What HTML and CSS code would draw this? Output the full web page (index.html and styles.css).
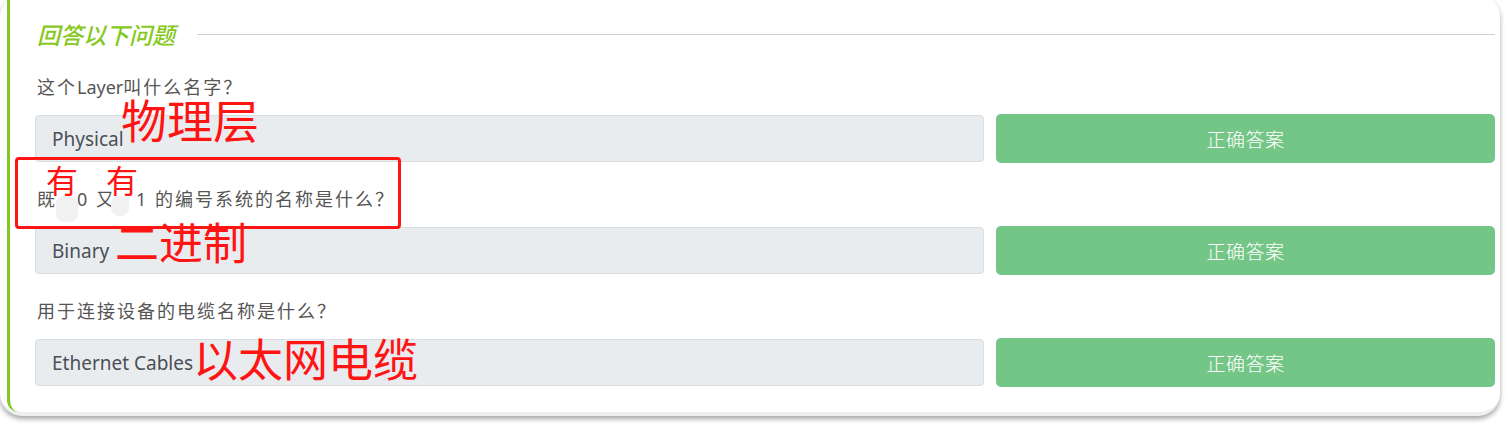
FILE: index.html
```html
<!DOCTYPE html>
<html lang="zh-CN">
<head>
<meta charset="utf-8">
<title>回答以下问题</title>
<link rel="stylesheet" href="styles.css">
</head>
<body>
<div class="window">
  <div class="card">
    <div class="heading">
      <h3 class="heading-title">回答以下问题</h3>
      <div class="heading-rule"></div>
    </div>

    <div class="question">
      <p class="q-text">这个<span class="latin">Layer</span>叫什么名字？</p>
      <div class="row">
        <div class="answer">Physical</div>
        <button class="btn">正确答案</button>
      </div>
      <span class="note note-1">物理层</span>
    </div>

    <div class="question">
      <p class="q-text">既<span class="erased"></span>0 又<span class="erased"></span>1 的编号系统的名称是什么？</p>
      <div class="row">
        <div class="answer">Binary</div>
        <button class="btn">正确答案</button>
      </div>
      <span class="note note-2">二进制</span>
      <span class="note-small note-you1">有</span>
      <span class="note-small note-you2">有</span>
      <span class="blob blob-1"></span>
      <span class="blob blob-2"></span>
      <span class="red-box"></span>
    </div>

    <div class="question">
      <p class="q-text">用于连接设备的电缆名称是什么？</p>
      <div class="row">
        <div class="answer">Ethernet Cables</div>
        <button class="btn">正确答案</button>
      </div>
      <span class="note note-3">以太网电缆</span>
    </div>
  </div>
</div>
</body>
</html>
```

FILE: styles.css
```css
html, body {
  margin: 0;
  padding: 0;
  background: #ffffff;
  overflow: hidden;
}

body {
  font-family: "Noto Sans", "Noto Sans CJK SC", sans-serif;
  width: 1509px;
  height: 425px;
}

.window {
  position: relative;
  width: 1500px;
  margin-top: -5px;
  background: #ffffff;
  border-radius: 22px;
  border-bottom: 4px solid #efefef;
  box-shadow: 0 3px 5px rgba(0, 0, 0, 0.35);
  box-sizing: border-box;
}

.card {
  position: relative;
  margin-left: 7px;
  margin-right: 5px;
  border-left: 3px solid #84c720;
  border-bottom-left-radius: 12px;
  padding: 25px 0 25px 25px;
}

.heading {
  display: flex;
  align-items: center;
  gap: 22px;
  height: 30px;
  padding-left: 2px;
}

.heading-title {
  margin: 0;
  font-size: 23px;
  font-weight: 500;
  font-style: italic;
  color: #86c91e;
  white-space: nowrap;
  line-height: 30px;
}

.heading-rule {
  flex: 1;
  height: 1px;
  background: #cfcfcf;
  margin-top: -2px;
}

.question {
  position: relative;
  margin-top: 25px;
}

.question + .question {
  margin-top: 24px;
}

.q-text {
  margin: 0 0 15px 2px;
  height: 24px;
  line-height: 24px;
  font-size: 18px;
  color: #555555;
  letter-spacing: 2px;
}

.latin {
  letter-spacing: 0;
}

.erased {
  display: inline-block;
  width: 20px;
}

.row {
  display: grid;
  grid-template-columns: 949px 499px;
  column-gap: 12px;
  align-items: center;
  height: 49px;
}

.answer {
  box-sizing: border-box;
  height: 47px;
  background: #e9ecef;
  border: 1px solid #d9dde1;
  border-radius: 4px;
  padding: 0 16px;
  display: flex;
  align-items: center;
  font-size: 19px;
  color: #4a5056;
}

.btn {
  height: 49px;
  border: none;
  border-radius: 5px;
  background: #74c686;
  color: #ffffff;
  font-family: "Noto Sans CJK SC", sans-serif;
  font-size: 19px;
  font-weight: 300;
  letter-spacing: 0.5px;
  cursor: pointer;
}

/* annotations drawn over the screenshot */
.note {
  position: absolute;
  color: #ff1414;
  font-family: "Noto Sans CJK SC", sans-serif;
  font-size: 46px;
  line-height: 1;
  white-space: nowrap;
}

.note-1 { left: 86px; top: 20px; }
.note-2 { left: 80px; top: 32px; font-size: 44px; }
.note-3 { left: 158px; top: 36px; font-size: 45px; }

.note-small {
  position: absolute;
  color: #ff1414;
  font-family: "Noto Sans CJK SC", sans-serif;
  font-size: 32px;
  line-height: 1;
  top: -24px;
}

.note-you1 { left: 11px; }
.note-you2 { left: 71px; }

.blob {
  position: absolute;
  background: #f1f1f1;
  border-radius: 8px;
}

.blob-1 { left: 21px; top: 9px; width: 22px; height: 26px; }
.blob-2 { left: 76px; top: 9px; width: 18px; height: 20px; }

.red-box {
  position: absolute;
  left: -20px;
  top: -30px;
  width: 386px;
  height: 72px;
  box-sizing: border-box;
  border: 3px solid #ff1414;
  border-radius: 4px;
}
```
